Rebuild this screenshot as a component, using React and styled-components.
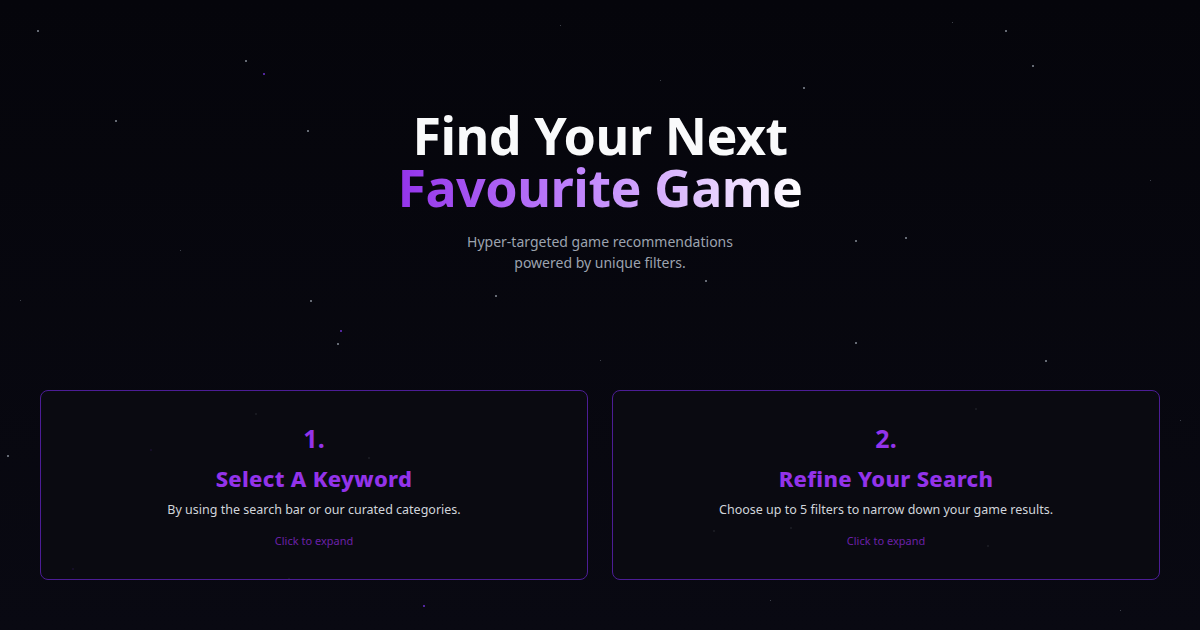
import React from "react";
import styled, { createGlobalStyle } from "styled-components";

const GlobalStyle = createGlobalStyle`
  html, body {
    margin: 0;
    padding: 0;
    background: #06060d;
  }
  body {
    font-family: "Noto Sans", "Open Sans", sans-serif;
  }
`;

const Page = styled.div`
  position: relative;
  width: 1200px;
  height: 630px;
  overflow: hidden;
  background: linear-gradient(180deg, #05050b 0%, #090912 100%);
  display: flex;
  flex-direction: column;
  align-items: center;
`;

const Star = styled.span`
  position: absolute;
  width: ${({ size }) => size}px;
  height: ${({ size }) => size}px;
  border-radius: 50%;
  background: ${({ purple }) => (purple ? "#7c3aed" : "#9ca3af")};
  opacity: ${({ dim }) => (dim ? 0.5 : 0.85)};
`;

const Hero = styled.section`
  position: relative;
  z-index: 1;
  padding-top: 109px;
  display: flex;
  flex-direction: column;
  align-items: center;
  text-align: center;
`;

const Title = styled.h1`
  margin: 0;
  font-size: 52px;
  line-height: 52px;
  font-weight: 700;
  color: #f9fafb;
  letter-spacing: -0.5px;
`;

const Gradient = styled.span`
  display: inline-block;
  background: linear-gradient(90deg, #9333ea 0%, #c084fc 45%, #ffffff 100%);
  -webkit-background-clip: text;
  background-clip: text;
  color: transparent;
`;

const Subtitle = styled.p`
  margin: 18px 0 0;
  font-size: 14px;
  line-height: 21px;
  color: #9ca3af;
`;

const Steps = styled.div`
  position: relative;
  z-index: 1;
  margin-top: 117px;
  width: 1120px;
  display: grid;
  grid-template-columns: 1fr 1fr;
  gap: 24px;
`;

const Card = styled.div`
  height: 190px;
  box-sizing: border-box;
  border: 1px solid #4c1d95;
  border-radius: 8px;
  background: rgba(10, 10, 18, 0.85);
  display: flex;
  flex-direction: column;
  align-items: center;
  padding-top: 30px;
  text-align: center;
`;

const Number = styled.div`
  font-size: 25px;
  line-height: 34px;
  font-weight: 700;
  color: #9333ea;
`;

const Heading = styled.h2`
  margin: 8px 0 0;
  font-size: 22px;
  line-height: 30px;
  font-weight: 800;
  letter-spacing: 0.3px;
  color: #9333ea;
`;

const Text = styled.p`
  margin: 7px 0 0;
  font-size: 12.5px;
  line-height: 20px;
  color: #d1d5db;
`;

const Expand = styled.span`
  margin-top: 13px;
  font-size: 11px;
  line-height: 16px;
  color: #6b21a8;
`;

const stars = [
  [37, 30, 2], [245, 60, 2], [263, 73, 2, 1], [115, 120, 2], [307, 130, 2],
  [660, 80, 1], [803, 87, 2], [1005, 30, 2], [1032, 65, 2], [855, 240, 2],
  [905, 237, 2], [705, 280, 2], [495, 295, 2], [310, 300, 2], [340, 330, 2, 1],
  [337, 343, 2], [1045, 360, 2], [975, 408, 2], [855, 342, 2], [255, 413, 2],
  [150, 449, 2, 1], [368, 457, 2], [7, 455, 2], [713, 530, 2], [790, 527, 2],
  [987, 545, 2], [288, 578, 2], [72, 568, 2, 1], [423, 605, 2, 1], [952, 22, 1],
  [560, 25, 1], [180, 250, 1], [1150, 180, 1], [600, 360, 1], [20, 300, 1],
  [1120, 610, 1], [770, 600, 1], [1180, 420, 1]
];

const steps = [
  {
    n: "1.",
    title: "Select A Keyword",
    text: "By using the search bar or our curated categories."
  },
  {
    n: "2.",
    title: "Refine Your Search",
    text: "Choose up to 5 filters to narrow down your game results."
  }
];

export default function App() {
  return (
    <>
      <GlobalStyle />
      <Page>
        {stars.map(([x, y, s, p], i) => (
          <Star
            key={i}
            size={s}
            purple={p ? 1 : 0}
            dim={s < 2 ? 1 : 0}
            style={{ left: x, top: y }}
          />
        ))}
        <Hero>
          <Title>
            Find Your Next
            <br />
            <Gradient>Favourite Game</Gradient>
          </Title>
          <Subtitle>
            Hyper-targeted game recommendations
            <br />
            powered by unique filters.
          </Subtitle>
        </Hero>
        <Steps>
          {steps.map((s) => (
            <Card key={s.n}>
              <Number>{s.n}</Number>
              <Heading>{s.title}</Heading>
              <Text>{s.text}</Text>
              <Expand>Click to expand</Expand>
            </Card>
          ))}
        </Steps>
      </Page>
    </>
  );
}
